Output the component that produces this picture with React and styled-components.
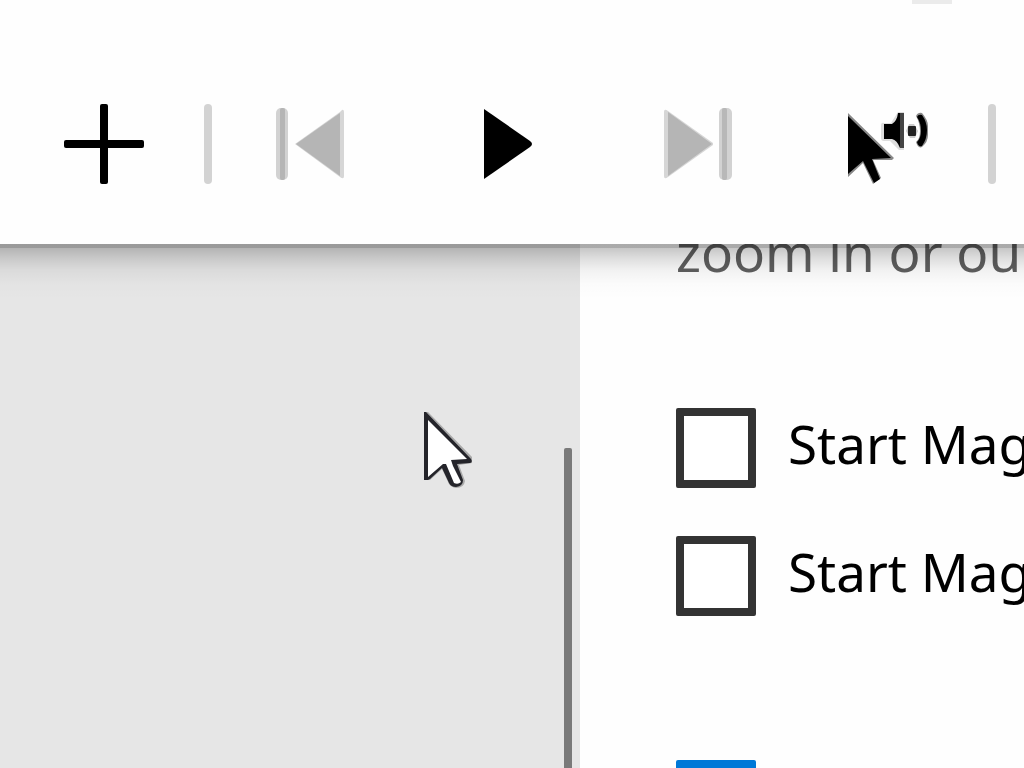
import React, { useState } from 'react';
import styled, { createGlobalStyle } from 'styled-components';

const GlobalStyle = createGlobalStyle`
  * {
    box-sizing: border-box;
  }
  body {
    margin: 0;
    overflow: hidden;
    background: #fff;
    font-family: 'Noto Sans', 'Open Sans', sans-serif;
  }
`;
const Page = styled.div`
  display: flex;
  flex-direction: column;
  height: 100vh;
`;
const Header = styled.header`
  position: relative;
  z-index: 1;
  background: #fefefe;
  padding-bottom: 4px;

  &::after {
    content: '';
    position: absolute;
    top: 100%;
    left: 0;
    right: 0;
    height: 56px;
    pointer-events: none;
    background: linear-gradient(
      rgba(0, 0, 0, 0.33) 4px,
      rgba(0, 0, 0, 0.22) 4px,
      rgba(0, 0, 0, 0.13) 14px,
      rgba(0, 0, 0, 0.05) 26px,
      rgba(0, 0, 0, 0.01) 40px,
      transparent
    );
  }
`;
const TitleBar = styled.div`
  display: flex;
  justify-content: flex-end;
  height: 48px;
  padding-right: 72px;
`;
const Grip = styled.span`
  width: 40px;
  height: 4px;
  background: #ebebeb;
`;
const Toolbar = styled.div`
  display: flex;
  align-items: center;
  padding-left: 8px;
  overflow: hidden;
`;
const ToolButton = styled.button`
  display: flex;
  flex: none;
  align-items: center;
  justify-content: center;
  width: 192px;
  height: 192px;
  padding: 0;
  border: 0;
  background: none;
`;
const Divider = styled.span`
  flex: none;
  width: 8px;
  height: 80px;
  margin: 0 4px;
  border-radius: 4px;
  background: #d3d3d3;
`;
const Body = styled.div`
  display: flex;
  flex: 1;
  min-height: 0;
`;
const Sidebar = styled.aside`
  position: relative;
  display: flex;
  flex: none;
  justify-content: flex-end;
  width: 580px;
  padding: 204px 8px 0 0;
  background: #e6e6e6;
`;
const ScrollThumb = styled.span`
  width: 8px;
  border-radius: 2px 2px 0 0;
  background: #7a7a7a;
`;
const Pointer = styled.svg`
  position: absolute;
  top: 168px;
  left: 424px;
`;
const Content = styled.main`
  flex: 1;
  min-width: 0;
  padding-left: 96px;
  overflow: hidden;
  background: #fefefe;
`;
const Hint = styled.p`
  height: 164px;
  margin: 0;
  font-size: 53px;
  line-height: 16px;
  white-space: nowrap;
  color: #5f5f5f;
`;
const Options = styled.div`
  display: flex;
  flex-direction: column;
  gap: 48px;
  margin-bottom: 144px;
`;
const Option = styled.label`
  display: flex;
  align-items: flex-start;
  gap: 32px;
  height: 80px;
  font-size: 53px;
  line-height: 72px;
  white-space: nowrap;
  color: #000;
`;
const Checkbox = styled.input`
  flex: none;
  width: 80px;
  height: 80px;
  margin: 0;
  appearance: none;
  border: 8px solid #333;
  border-radius: 2px;
  background: #fff;

  &:checked {
    border-color: #0078d7;
    background: #0078d7;
  }
`;

function Icon({ children }) {
  return (
    <svg width="80" height="80" viewBox="0 0 80 80" aria-hidden="true">
      {children}
    </svg>
  );
}

function PlusIcon() {
  return (
    <Icon>
      <rect x="36" width="8" height="80" rx="2" />
      <rect y="36" width="80" height="8" rx="2" />
    </Icon>
  );
}

function PreviousIcon() {
  return (
    <Icon>
      <rect x="4" y="4" width="12" height="72" rx="5" fill="#d2d2d2" />
      <rect x="8" y="4" width="5" height="72" rx="2" fill="#b5b5b5" />
      <path d="M23 40 68 8 70 6Q72 5 72 9V72Q72 76 68 73Z" fill="#d6d6d6" />
      <path d="M24 40 68 9V72Z" fill="#b5b5b5" />
    </Icon>
  );
}

function PlayIcon() {
  return (
    <Icon>
      <path d="M20 5 66 37Q70 40 66 43L20 75Z" />
    </Icon>
  );
}

function NextIcon() {
  return (
    <Icon>
      <path d="M8 8Q8 4 12 7L57 39V41L12 73Q8 76 8 72Z" fill="#d6d6d6" />
      <path d="M12 8 56 40 12 72Z" fill="#b5b5b5" />
      <rect x="63" y="4" width="13" height="72" rx="5" fill="#d2d2d2" />
      <rect x="66" y="4" width="5" height="72" rx="2" fill="#b8b8b8" />
    </Icon>
  );
}

function ReadFromHereIcon() {
  return (
    <Icon>
      <path d="M0 9 46 54 44 56 25 56 33 74 25 80 15 59 0 73Z" fill="#888" />
      <path d="M0 12 43 54 24 55 32 75 26 79 15 57 0 70Z" />
      <path d="M33 22Q33 18 36 19H43L50 8H56V46H51L42 37H36Q33 37 33 34Z" fill="#ddd" />
      <path d="M36 20H44Q49 17 50 9H56V44H52Q49 36 44 35H36Z" />
      <rect x="52" y="9" width="4" height="35" fill="#444" />
      <path d="M58 27 61 20H66L70 27 67 34H62Z" fill="#ccc" />
      <rect x="60" y="22" width="8" height="10" rx="1" fill="#222" />
      <path d="M68 12Q70 8 74 9 80 16 80 22V31Q80 38 74 43 70 45 68 38 72 35 72 27 72 19 68 12Z" fill="#888" />
      <path d="M69 13Q70 10 74 11 79 18 79 26 79 35 74 42 70 43 69 38 73 34 73 27 73 19 69 13Z" />
    </Icon>
  );
}

function App() {
  const [startup, setStartup] = useState([false, false]);
  const [enabled, setEnabled] = useState(true);

  const toggle = (index) => {
    setStartup(startup.map((value, i) => (i === index ? !value : value)));
  };

  return (
    <>
      <GlobalStyle />
      <Page>
        <Header>
          <TitleBar>
            <Grip />
          </TitleBar>
          <Toolbar>
            <ToolButton aria-label="Zoom in">
              <PlusIcon />
            </ToolButton>
            <Divider />
            <ToolButton aria-label="Previous" disabled>
              <PreviousIcon />
            </ToolButton>
            <ToolButton aria-label="Play">
              <PlayIcon />
            </ToolButton>
            <ToolButton aria-label="Next" disabled>
              <NextIcon />
            </ToolButton>
            <ToolButton aria-label="Read from here">
              <ReadFromHereIcon />
            </ToolButton>
            <Divider />
          </Toolbar>
        </Header>
        <Body>
          <Sidebar>
            <ScrollThumb />
            <Pointer width="50" height="78" viewBox="0 0 50 78" aria-hidden="true">
              <path d="M1 0H4L48 45V51L35 53 41 69Q40 76 32 76 27 75 25 72L18 57 6 68H1Z" fill="#aaa" />
              <path d="M0 0H2L47 47Q49 50 46 51L33 52 39 68Q39 74 32 75 27 75 25 71L18 56 6 67 4 68H0Z" fill="#24242a" />
              <path d="M4 8 43 47 27 48 29 54 37 70Q34 73 30 71L22 52H19L4 65Z" fill="#fff" />
            </Pointer>
          </Sidebar>
          <Content>
            <Hint>zoom in or ou</Hint>
            <Options>
              {startup.map((checked, index) => (
                <Option key={index}>
                  <Checkbox type="checkbox" checked={checked} onChange={() => toggle(index)} />
                  Start Mag
                </Option>
              ))}
            </Options>
            <Checkbox
              type="checkbox"
              aria-label="Enabled"
              checked={enabled}
              onChange={() => setEnabled(!enabled)}
            />
          </Content>
        </Body>
      </Page>
    </>
  );
}

export default App;
